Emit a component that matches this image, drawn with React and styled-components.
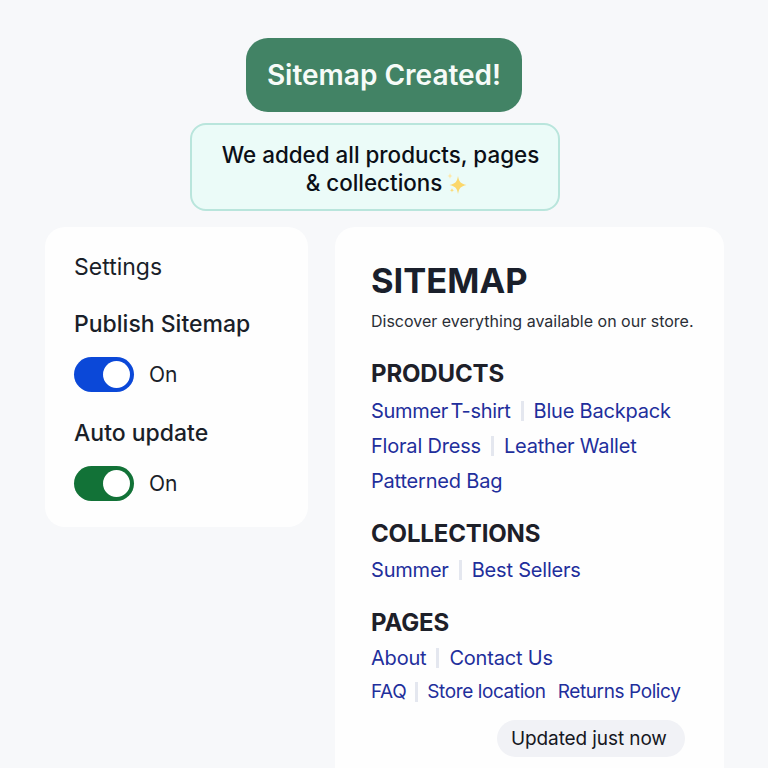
import React from 'react'
import styled, { createGlobalStyle } from 'styled-components'

const GlobalStyle = createGlobalStyle`
  html, body {
    margin: 0;
    height: 768px;
    overflow: hidden;
    background: #f7f8fa;
    font-family: Inter, "Liberation Sans", sans-serif;
  }
`

const Page = styled.div`
  height: 768px;
  overflow: hidden;
  padding-top: 38px;
  box-sizing: border-box;
  display: flex;
  flex-direction: column;
  align-items: center;
`

const Banner = styled.div`
  flex: none;
  width: 276px;
  height: 74px;
  padding-bottom: 1px;
  box-sizing: border-box;
  border-radius: 22px;
  background: #428365;
  color: #f6fbf8;
  font-size: 28px;
  font-weight: 600;
  display: flex;
  align-items: center;
  justify-content: center;
`

const Notice = styled.div`
  flex: none;
  width: 370px;
  height: 88px;
  margin: 11px 18px 0 0;
  box-sizing: border-box;
  border: 2px solid #b9e5dc;
  border-radius: 16px;
  background: #ebfbf8;
  color: #0b0f17;
  font-size: 22.400px;
  font-weight: 500;
  line-height: 28px;
  text-align: center;
  padding: 16px 0 0 11px;
`

const NoticeLine = styled.span`
  display: block;
  padding-left: ${p => p.$indent || 0}px;
`

const Sparkle = styled.svg`
  width: 24px;
  height: 24px;
  vertical-align: -6px;
  margin-left: 3px;
`

const Columns = styled.div`
  flex: none;
  align-self: stretch;
  display: flex;
  align-items: flex-start;
  gap: 27px;
  margin-top: 16px;
  padding-left: 45px;
`

const Card = styled.section`
  flex: none;
  background: #fefefe;
  border-radius: 20px;
  box-sizing: border-box;
`

const SettingsCard = styled(Card)`
  width: 263px;
  height: 300px;
  padding: 26px 29px;
`

const SettingsTitle = styled.div`
  font-size: 23px;
  line-height: 28px;
  color: #1a1f29;
`

const SettingLabel = styled.div`
  font-size: 23px;
  font-weight: 500;
  line-height: 28px;
  color: #1a1f29;
  margin-top: ${p => p.$top}px;
`

const ToggleRow = styled.div`
  display: flex;
  align-items: center;
  gap: 15px;
  margin-top: 19px;
  font-size: 21px;
  color: #1a1f29;
`

const Toggle = styled.div`
  width: 60px;
  height: 35px;
  border-radius: 18px;
  background: ${p => p.$color};
  display: flex;
  align-items: center;
  justify-content: flex-end;
  padding-right: 4px;
  box-sizing: border-box;
`

const Knob = styled.div`
  width: 27px;
  height: 27px;
  border-radius: 50%;
  background: #fff;
`

const SitemapCard = styled(Card)`
  width: 389px;
  height: 600px;
  padding: 33px 36px;
`

const Title = styled.h1`
  margin: 0;
  font-size: 34.500px;
  line-height: 42px;
  font-weight: 700;
  color: #1a1f2b;
`

const Lead = styled.p`
  margin: 8px 0 0;
  font-size: 16px;
  line-height: 22px;
  color: #2a2e36;
  white-space: nowrap;
`

const Heading = styled.h2`
  margin: ${p => p.$top}px 0 0;
  font-size: 24px;
  line-height: 28px;
  font-weight: 700;
  letter-spacing: -0.15px;
  color: #1d2029;
`

const LinkRow = styled.div`
  display: flex;
  align-items: center;
  height: 35px;
  margin-top: ${p => p.$top || 0}px;
  font-size: ${p => p.$size || 20}px;
  letter-spacing: ${p => p.$tracking || -0.2}px;
  color: #1f2f9c;
  white-space: nowrap;
`

const Sep = styled.span`
  flex: none;
  width: 3px;
  height: 20px;
  margin: 0 ${p => p.$gap || 10}px;
  background: #e4e7ef;
`

const Tight = styled.span`
  word-spacing: -3px;
  letter-spacing: -0.3px;
`

const Spaced = styled.span`
  margin-left: 12px;
`

const Footer = styled.div`
  display: flex;
  justify-content: flex-end;
  margin-top: 11px;
  padding-right: 3px;
`

const Pill = styled.div`
  width: 188px;
  height: 37px;
  border-radius: 19px;
  background: #f1f2f6;
  color: #16181f;
  font-size: 19px;
  font-weight: 400;
  letter-spacing: -0.1px;
  display: flex;
  align-items: center;
  padding-left: 14px;
  box-sizing: border-box;
`

const SparkleIcon = () => (
  <Sparkle viewBox="0 0 24 24">
    <path d="M13 3c1 6 2.500 7.500 8.500 9-6 1.500-7.500 3-8.500 9-1-6-2.500-7.500-8.500-9 6-1.500 7.500-3 8.500-9z" fill="#fbd76b" />
    <path d="M5 0c.4 2 1 2.600 2.800 3-1.800.4-2.400 1-2.800 3-.4-2-1-2.600-2.800-3 1.800-.4 2.400-1 2.800-3z" fill="#fde9ac" />
    <path d="M7 15c.3 1.500.8 2 2.200 2.300-1.400.3-1.900.8-2.200 2.300-.3-1.500-.8-2-2.200-2.300 1.400-.3 1.900-.8 2.200-2.300z" fill="#fbdc7a" />
  </Sparkle>
)

const App = () => (
  <Page>
    <GlobalStyle />
    <Banner>Sitemap Created!</Banner>
    <Notice>
      <NoticeLine>We added all products, pages</NoticeLine>
      <NoticeLine $indent={14}>
        &amp; collections
        <SparkleIcon />
      </NoticeLine>
    </Notice>
    <Columns>
      <SettingsCard>
        <SettingsTitle>Settings</SettingsTitle>
        <SettingLabel $top={29}>Publish Sitemap</SettingLabel>
        <ToggleRow>
          <Toggle $color="#0b48d8"><Knob /></Toggle>
          On
        </ToggleRow>
        <SettingLabel $top={27}>Auto update</SettingLabel>
        <ToggleRow>
          <Toggle $color="#127237"><Knob /></Toggle>
          On
        </ToggleRow>
      </SettingsCard>
      <SitemapCard>
        <Title>SITEMAP</Title>
        <Lead>Discover everything available on our store.</Lead>
        <Heading $top={28}>PRODUCTS</Heading>
        <LinkRow $top={5}><Tight>Summer T-shirt</Tight><Sep />Blue Backpack</LinkRow>
        <LinkRow>Floral Dress<Sep />Leather Wallet</LinkRow>
        <LinkRow>Patterned Bag</LinkRow>
        <Heading $top={22}>COLLECTIONS</Heading>
        <LinkRow $top={4}>Summer<Sep />Best Sellers</LinkRow>
        <Heading $top={22}>PAGES</Heading>
        <LinkRow $top={3}>About<Sep />Contact Us</LinkRow>
        <LinkRow $size={19} $tracking={-0.4} $top={-1}>FAQ<Sep $gap={9} />Store location<Spaced>Returns Policy</Spaced></LinkRow>
        <Footer><Pill>Updated just now</Pill></Footer>
      </SitemapCard>
    </Columns>
  </Page>
)

export default App
